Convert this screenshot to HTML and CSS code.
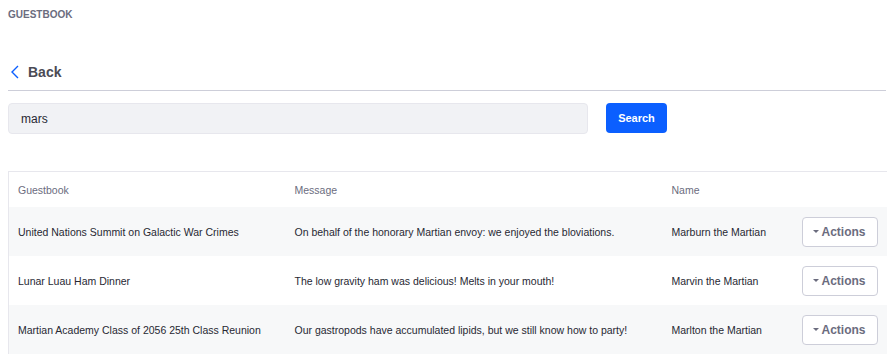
FILE: index.html
```html
<!DOCTYPE html>
<html lang="en">
<head>
    <meta charset="UTF-8">
    <meta name="viewport" content="width=device-width, initial-scale=1.0">
    <title>Guestbook</title>
    <link rel="stylesheet" href="styles.css">
</head>
<body>
    <div class="container">
        <div class="portlet-title">Guestbook</div>

        <div class="header-back">
            <a class="back-link" href="#">
                <svg class="back-icon" width="10" height="14" viewBox="0 0 10 14">
                    <path d="M8 1 L2 7 L8 13" fill="none" stroke="#0b5fff" stroke-width="1.4"/>
                </svg>
                <span>Back</span>
            </a>
        </div>

        <form class="search-form">
            <input type="text" class="search-input" value="mars">
            <button type="button" class="btn-search">Search</button>
        </form>

        <table class="entries">
            <colgroup>
                <col class="col-guestbook">
                <col class="col-message">
                <col class="col-name">
                <col class="col-actions">
            </colgroup>
            <thead>
                <tr>
                    <th>Guestbook</th>
                    <th>Message</th>
                    <th>Name</th>
                    <th></th>
                </tr>
            </thead>
            <tbody>
                <tr>
                    <td>United Nations Summit on Galactic War Crimes</td>
                    <td>On behalf of the honorary Martian envoy: we enjoyed the bloviations.</td>
                    <td>Marburn the Martian</td>
                    <td><button class="btn-actions"><span class="caret"></span>Actions</button></td>
                </tr>
                <tr>
                    <td>Lunar Luau Ham Dinner</td>
                    <td>The low gravity ham was delicious! Melts in your mouth!</td>
                    <td>Marvin the Martian</td>
                    <td><button class="btn-actions"><span class="caret"></span>Actions</button></td>
                </tr>
                <tr>
                    <td>Martian Academy Class of 2056 25th Class Reunion</td>
                    <td>Our gastropods have accumulated lipids, but we still know how to party!</td>
                    <td>Marlton the Martian</td>
                    <td><button class="btn-actions"><span class="caret"></span>Actions</button></td>
                </tr>
            </tbody>
        </table>
    </div>
</body>
</html>
```

FILE: styles.css
```css
body {
    font-family: "Liberation Sans", Arial, sans-serif;
    background-color: #fff;
    color: #272833;
    margin: 0;
    padding: 0;
}

.container {
    padding: 8px 8px 0 8px;
}

.portlet-title {
    font-size: 10px;
    font-weight: bold;
    text-transform: uppercase;
    color: #6b6c7e;
    height: 14px;
    line-height: 14px;
}

.header-back {
    margin-top: 40px;
    padding-bottom: 8px;
    border-bottom: 1px solid #cdced9;
}

.back-link {
    display: flex;
    align-items: center;
    text-decoration: none;
    color: #4b4b55;
    font-size: 14px;
    font-weight: bold;
    height: 20px;
}

.back-icon {
    margin-left: 2px;
    margin-right: 8px;
}

.search-form {
    display: flex;
    align-items: flex-start;
    margin-top: 12px;
}

.search-input {
    width: 580px;
    height: 31px;
    box-sizing: border-box;
    background-color: #f1f2f5;
    border: 1px solid #e7e7ed;
    border-radius: 4px;
    padding: 0 12px;
    font-family: inherit;
    font-size: 12px;
    color: #272833;
}

.btn-search {
    margin-left: 18px;
    width: 61px;
    height: 30px;
    background-color: #0b5fff;
    color: #fff;
    border: none;
    border-radius: 4px;
    font-family: inherit;
    font-size: 11px;
    font-weight: bold;
}

.entries {
    margin-top: 37px;
    width: 878px;
    table-layout: fixed;
    border-collapse: collapse;
    border-top: 1px solid #e7e7ed;
    border-left: 1px solid #e7e7ed;
    font-size: 10.5px;
}

.col-guestbook { width: 277px; }
.col-message { width: 377px; }
.col-name { width: 130px; }
.col-actions { width: 94px; }

.entries th {
    text-align: left;
    font-weight: normal;
    color: #6b6c7e;
    height: 35px;
    padding: 0 9px;
}

.entries td {
    height: 49px;
    padding: 0 9px;
    color: #272833;
    white-space: nowrap;
}

.entries tbody tr:nth-child(odd) {
    background-color: #f7f8f9;
}

.btn-actions {
    width: 76px;
    height: 30px;
    background-color: #fff;
    border: 1px solid #cdced9;
    border-radius: 4px;
    font-family: inherit;
    font-size: 12px;
    font-weight: bold;
    color: #6b6c7e;
    display: flex;
    align-items: center;
    justify-content: center;
}

.caret {
    display: inline-block;
    width: 0;
    height: 0;
    border-left: 3px solid transparent;
    border-right: 3px solid transparent;
    border-top: 3px solid #6b6c7e;
    margin-right: 2px;
}
```
